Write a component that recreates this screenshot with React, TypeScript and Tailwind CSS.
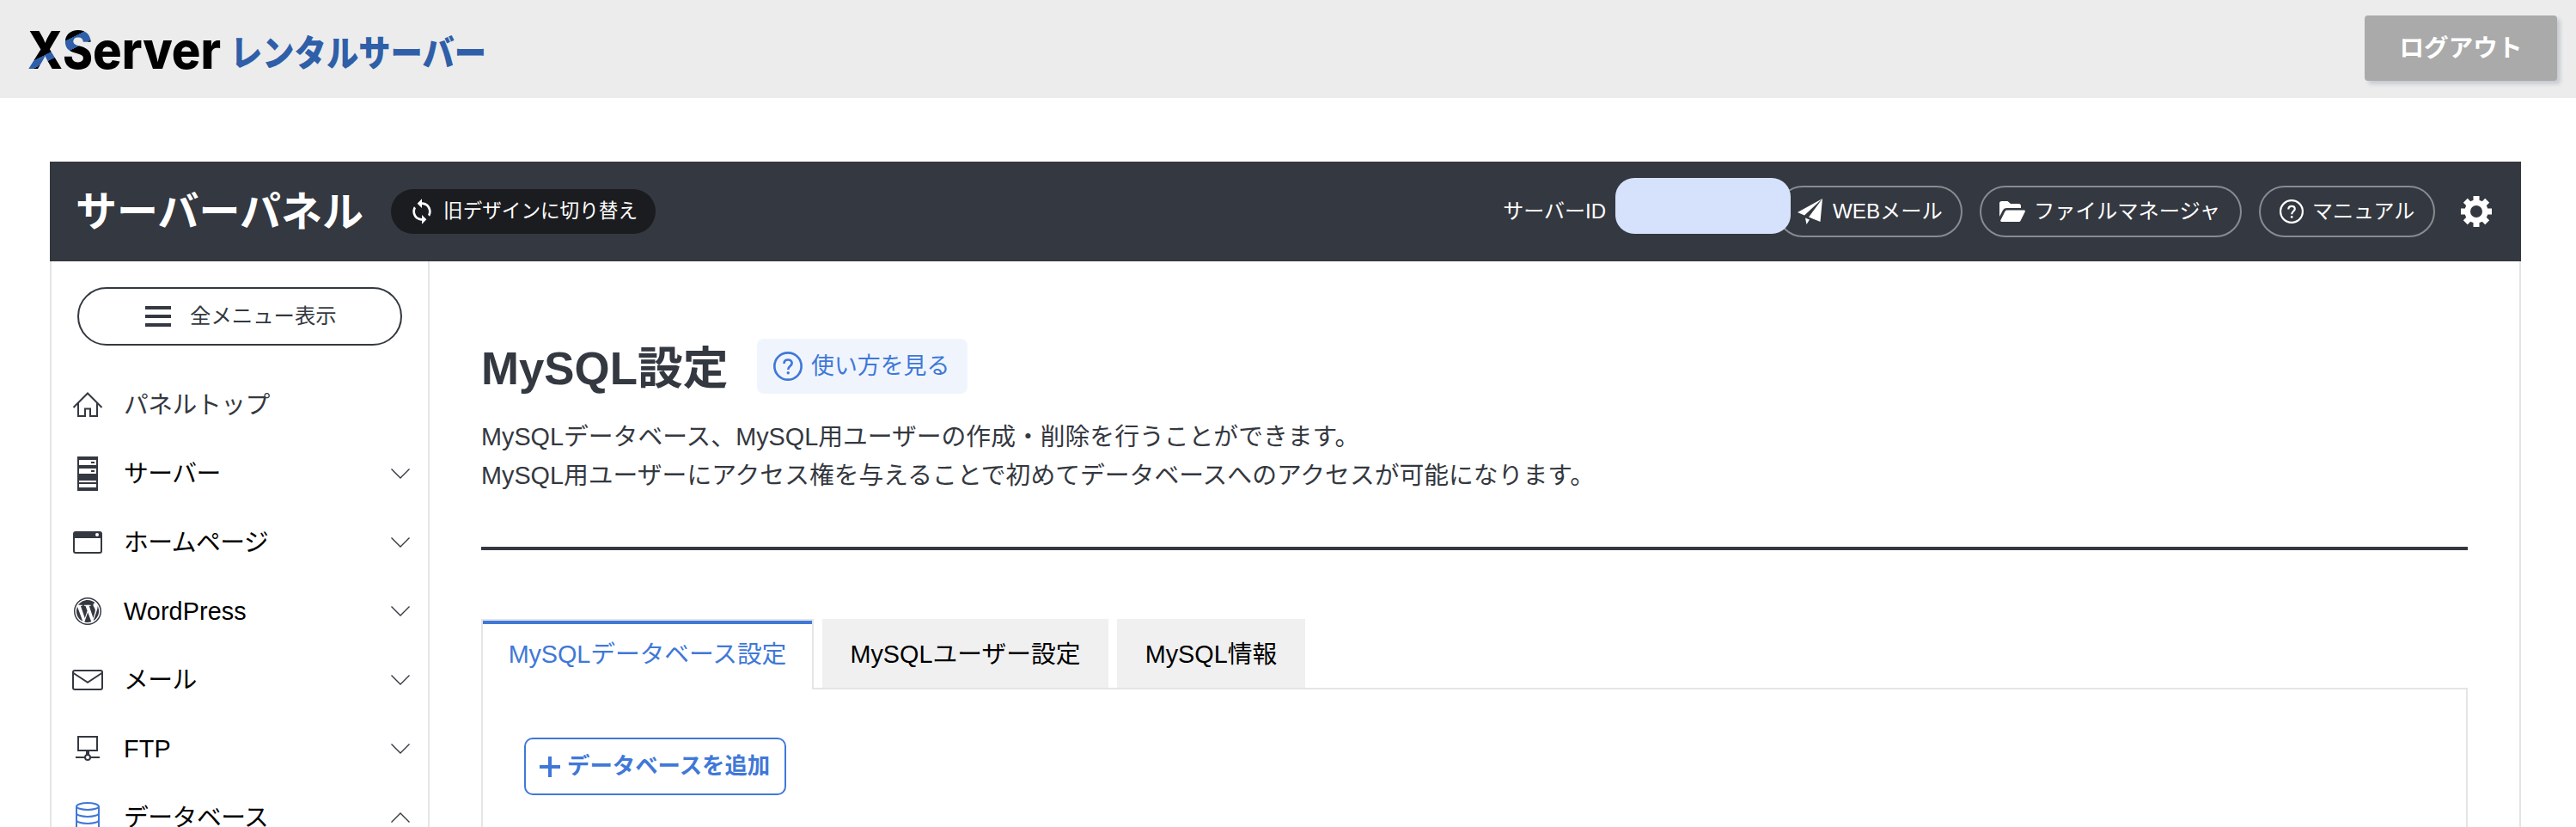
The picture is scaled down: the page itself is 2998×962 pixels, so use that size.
import { ReactNode } from 'react';
import { FaWordpressSimple } from 'react-icons/fa';

type IconProps = { className?: string };

function SyncIcon() {
  return (
    <svg width="32" height="32" viewBox="0 0 24 24" fill="currentColor">
      <path d="M12 4V1L8 5l4 4V6c3.31 0 6 2.69 6 6 0 1.01-.25 1.97-.7 2.8l1.46 1.46C19.54 15.03 20 13.57 20 12c0-4.42-3.58-8-8-8zm0 14c-3.31 0-6-2.69-6-6 0-1.01.25-1.97.7-2.8L5.24 7.74C4.46 8.97 4 10.43 4 12c0 4.42 3.58 8 8 8v3l4-4-4-4v3z" />
    </svg>
  );
}

function PlaneIcon() {
  return (
    <svg width="30" height="30" viewBox="0 0 30 30" fill="currentColor">
      <path d="M29 0 L0 16 L8 19.5 Z" />
      <path d="M29 0 L26.500 27 L13 21.5 Z" />
      <path d="M9 22.5 L14 24.500 L10.500 30 Z" />
    </svg>
  );
}

function FolderIcon() {
  return (
    <svg width="30" height="24" viewBox="0 0 30 24" fill="currentColor">
      <path d="M0 2.500C0 1 1 0 2.500 0h7l3.500 3h9.500C24 3 25 4 25 5.500V8H8.500C6.500 8 5 8.800 4 10.500L0 18z" />
      <path d="M8.800 10.500h19.700c1.200 0 1.700 1 1.200 2l-5 10c-.5 1-1.200 1.500-2.300 1.500H2.500c-1.100 0-1.600-.9-1.100-1.900l5-10c.5-1 1.300-1.600 2.400-1.600z" />
    </svg>
  );
}

function HelpIcon({ className }: IconProps) {
  return (
    <svg className={className} viewBox="0 0 28 28" fill="none" stroke="currentColor">
      <circle cx="14" cy="14" r="12.9" strokeWidth="2.200" />
      <path d="M10.300 11.600 C10.300 9.200 11.900 7.800 14 7.800 C16.200 7.800 17.800 9.200 17.800 11.100 C17.800 13.700 14.200 14 14.200 17.200" strokeWidth="2.200" />
      <circle cx="14.200" cy="20.400" r="1.400" fill="currentColor" stroke="none" />
    </svg>
  );
}

function GearIcon() {
  return (
    <svg width="36" height="36" viewBox="0 0 36 36" fill="none" stroke="currentColor">
      <circle cx="18" cy="18" r="10.300" strokeWidth="6.600" />
      <path
        d="M18 0v6M18 30v6M0 18h6M30 18h6M5.300 5.300l4.200 4.200M26.500 26.500l4.200 4.200M5.300 30.700l4.200-4.200M26.500 9.500l4.200-4.200"
        strokeWidth="7"
      />
    </svg>
  );
}

function HomeIcon() {
  return (
    <svg width="36" height="30" viewBox="0 0 36 30" fill="none" stroke="currentColor" strokeWidth="2">
      <path d="M1.500 18 L18 1.500 L34.500 18" />
      <path d="M7 13v15h8v-8.500h6V28h8V13" />
    </svg>
  );
}

function ServerIcon() {
  return (
    <svg width="24" height="40" viewBox="0 0 24 40" shapeRendering="crispEdges">
      <path d="M0 0h24v40H0z" fill="currentColor" />
      <path d="M2 4h20v6H2zM2 14h20v6H2zM2 28h20v2H2zM2 32h20v4H2z" fill="#fff" />
      <path d="M16 6h4v2h-4zM16 16h4v2h-4z" fill="currentColor" />
    </svg>
  );
}

function WindowIcon() {
  return (
    <svg width="34" height="26" viewBox="0 0 34 26">
      <rect x="1" y="1" width="32" height="24" rx="2" fill="none" stroke="currentColor" strokeWidth="2" />
      <path d="M1 2h32v6H1z" fill="currentColor" />
      <circle cx="28" cy="4" r="2" fill="#fff" />
    </svg>
  );
}

function WordPressIcon() {
  return (
    <span className="flex size-8 items-center justify-center rounded-full bg-[#343840]">
      <FaWordpressSimple className="size-[30px] text-white" />
    </span>
  );
}

function MailIcon() {
  return (
    <svg width="36" height="24" viewBox="0 0 36 24" fill="none" stroke="currentColor" strokeWidth="2">
      <rect x="1" y="1" width="34" height="22" rx="2" />
      <path d="M1.500 4 L18 14.800 L34.500 4" />
    </svg>
  );
}

function FtpIcon() {
  return (
    <svg width="28" height="30" viewBox="0 0 28 30" fill="none" stroke="currentColor" strokeWidth="2">
      <path d="M3 1h22v16H3z" />
      <path d="M14 17v5" strokeWidth="4" />
      <path d="M0 25h11M17 25h11" />
      <circle cx="14" cy="25" r="3" />
    </svg>
  );
}

function DatabaseIcon() {
  return (
    <svg width="28" height="36" viewBox="0 0 28 36" fill="none" stroke="currentColor" strokeWidth="2">
      <ellipse cx="14" cy="5" rx="13" ry="4" />
      <path d="M1 5v26c0 2.200 5.800 4 13 4s13-1.800 13-4V5" />
      <path d="M1 13c0 2.200 5.800 4 13 4s13-1.800 13-4M1 21c0 2.200 5.800 4 13 4s13-1.800 13-4" />
    </svg>
  );
}

function Chevron({ open }: { open?: boolean }) {
  return (
    <svg width="22" height="12" viewBox="0 0 22 12" fill="none" stroke="#343840" strokeWidth="1.400">
      <path d={open ? 'M.5 11.500 L11 1 L21.500 11.500' : 'M.5 .5 L11 11 L21.500 .5'} />
    </svg>
  );
}

interface MenuItem {
  label: string;
  icon: ReactNode;
  expandable: boolean;
  open?: boolean;
  latin?: boolean;
}

const menuItems: MenuItem[] = [
  { label: 'パネルトップ', icon: <HomeIcon />, expandable: false },
  { label: 'サーバー', icon: <ServerIcon />, expandable: true },
  { label: 'ホームページ', icon: <WindowIcon />, expandable: true },
  { label: 'WordPress', icon: <WordPressIcon />, expandable: true, latin: true },
  { label: 'メール', icon: <MailIcon />, expandable: true },
  { label: 'FTP', icon: <FtpIcon />, expandable: true, latin: true },
  { label: 'データベース', icon: <DatabaseIcon />, expandable: true, open: true }
];

function Logo() {
  return (
    <svg width="550" height="90" viewBox="0 -12 550 90" className="mt-4">
      <defs>
        <linearGradient id="logo-x" gradientUnits="userSpaceOnUse" x1="0" y1="0" x2="27" y2="53.400">
          <stop offset="0.687" stopColor="#000" />
          <stop offset="0.687" stopColor="#2f5fa8" />
          <stop offset="0.825" stopColor="#2f5fa8" />
          <stop offset="0.825" stopColor="#000" />
        </linearGradient>
        <linearGradient id="logo-s" gradientUnits="userSpaceOnUse" x1="0" y1="0" x2="27" y2="53.400">
          <stop offset="0.625" stopColor="#000" />
          <stop offset="0.625" stopColor="#2f5fa8" />
          <stop offset="0.830" stopColor="#2f5fa8" />
          <stop offset="0.830" stopColor="#000" />
        </linearGradient>
      </defs>
      <g fontSize="60" fontWeight="800" fontFamily="Inter, sans-serif">
        <text x="0" y="52" textLength="41" lengthAdjust="spacingAndGlyphs" fill="url(#logo-x)">
          X
        </text>
        <text x="41" y="52" textLength="35" lengthAdjust="spacingAndGlyphs" fill="url(#logo-s)">
          S
        </text>
        <text x="76" y="52" textLength="149" lengthAdjust="spacingAndGlyphs">
          erver
        </text>
      </g>
      <text x="236" y="49" textLength="298" lengthAdjust="spacingAndGlyphs" fontSize="42" fontWeight="900" fill="#2f5fa8" fontFamily="Noto Sans CJK JP, sans-serif">
        レンタルサーバー
      </text>
    </svg>
  );
}

function TopBar() {
  return (
    <header className="flex h-[114px] items-start justify-between bg-[#ececec] pr-[22px] pl-8">
      <Logo />
      <button className="mt-[18px] h-[76px] w-[224px] rounded bg-[#aaa] text-[28.600px] font-bold text-white shadow-[4px_4px_4px_#c8ccd2]">
        ログアウト
      </button>
    </header>
  );
}

function PanelHeader() {
  return (
    <div className="flex h-[116px] items-center justify-between bg-[#343840] pr-[34px] pl-[30px] text-white">
      <div className="flex items-center gap-8">
        <h1 className="pt-0.5 text-[48px] leading-none font-bold">サーバーパネル</h1>
        <button className="flex h-[52px] w-[308px] items-center gap-[9px] rounded-full bg-[#1b1c1f] pl-5 text-[22.600px]">
          <SyncIcon />
          旧デザインに切り替え
        </button>
      </div>
      <div className="flex items-center text-[24px]">
        <span>サーバーID</span>
        <span className="relative z-10 -mt-[13px] ml-[11px] h-[65px] w-[204px] rounded-[22px] bg-[#d6e1fc]" />
        <button className="-ml-4 flex h-[60px] w-[216px] items-center gap-[11px] rounded-full border-2 border-[#888b90] pl-[22px] text-[24.200px]">
          <PlaneIcon />
          WEBメール
        </button>
        <button className="ml-5 flex h-[60px] w-[305px] items-center gap-[10px] rounded-full border-2 border-[#888b90] pl-[21px] text-[24.300px]">
          <FolderIcon />
          ファイルマネージャ
        </button>
        <button className="ml-5 flex h-[60px] w-[205px] items-center gap-[10px] rounded-full border-2 border-[#888b90] pl-[22px]">
          <HelpIcon className="size-7" />
          マニュアル
        </button>
        <button className="ml-[30px]">
          <GearIcon />
        </button>
      </div>
    </div>
  );
}

function Sidebar() {
  return (
    <aside className="w-[440px] shrink-0 border-r-2 border-[#e5e5e5] pt-[30px]">
      <button className="mx-[30px] flex h-[68px] w-[378px] items-center gap-[22px] rounded-full border-2 border-[#343840] pl-[77px] text-[24.400px]">
        <span className="flex flex-col gap-1.5">
          <span className="h-1 w-[30px] bg-[#343840]" />
          <span className="h-1 w-[30px] bg-[#343840]" />
          <span className="h-1 w-[30px] bg-[#343840]" />
        </span>
        全メニュー表示
      </button>
      <nav className="mt-[29px]">
        {menuItems.map((item) => (
          <a
            key={item.label}
            className={`flex h-20 items-center pr-[21px] pl-6 text-[28.800px] ${item.expandable ? 'text-black' : 'text-[#343840]'}`}
          >
            <span className={`flex w-9 justify-center ${item.open ? 'text-[#4078d8]' : 'text-[#343840]'}`}>{item.icon}</span>
            <span className={`ml-6 flex-1 pt-0.5 ${item.latin ? 'tracking-[0.1px]' : 'tracking-[-0.5px]'}`}>{item.label}</span>
            {item.expandable && <Chevron open={item.open} />}
          </a>
        ))}
      </nav>
    </aside>
  );
}

function MainContent() {
  return (
    <main className="flex flex-1 flex-col px-[60px] pt-[90px]">
      <div className="flex h-16 items-center">
        <h2 className="w-[321px] pt-1.5 text-[52.800px] leading-none font-bold">MySQL設定</h2>
        <button className="flex h-16 w-[245px] items-center gap-[10px] rounded-lg bg-[#f0f5fd] pl-[19px] text-[26.900px] text-[#4078d8]">
          <HelpIcon className="size-[34px]" />
          使い方を見る
        </button>
      </div>
      <p className="mt-7 text-[28.800px] leading-[45px]">
        MySQLデータベース、MySQL用ユーザーの作成・削除を行うことができます。
        <br />
        MySQL用ユーザーにアクセス権を与えることで初めてデータベースへのアクセスが可能になります。
      </p>
      <hr className="mt-[60px] border-t-4 border-[#343840]" />

      <div className="mt-20 flex h-[82px] items-start text-[28.800px] text-black">
        <button className="h-[82px] w-[387px] border-x-2 border-t-2 border-[#e5e5e5] text-[#4078d8]">
          <span className="flex h-20 items-center justify-center border-t-4 border-[#4078d8] pb-1 tracking-[-0.1px]">
            MySQLデータベース設定
          </span>
        </button>
        <div className="flex h-[82px] flex-1 gap-[10px] border-b-2 border-[#e5e5e5] pl-[10px]">
          <button className="h-20 w-[333px] bg-[#f0f0f0] pt-1">MySQLユーザー設定</button>
          <button className="h-20 w-[219px] bg-[#f0f0f0] pt-1">MySQL情報</button>
        </div>
      </div>
      <div className="flex-1 border-x-2 border-[#e5e5e5] pt-14 pl-12">
        <button className="flex h-[67px] w-[305px] items-center gap-2 rounded-[10px] border-2 border-[#4078d8] pl-4 text-[26.400px] font-bold text-[#4078d8]">
          <svg width="24" height="24" viewBox="0 0 24 24" stroke="currentColor" strokeWidth="4">
            <path d="M12 0v24M0 12h24" />
          </svg>
          データベースを追加
        </button>
      </div>
    </main>
  );
}

export default function App() {
  return (
    <div className="h-[962px] w-[2998px] overflow-hidden bg-white font-['Liberation_Sans','Noto_Sans_CJK_JP',sans-serif] text-[#343840]">
      <TopBar />
      <div className="mt-[74px] mr-16 ml-[58px]">
        <PanelHeader />
        <div className="flex h-[658px] border-x-2 border-[#e5e5e5]">
          <Sidebar />
          <MainContent />
        </div>
      </div>
    </div>
  );
}
